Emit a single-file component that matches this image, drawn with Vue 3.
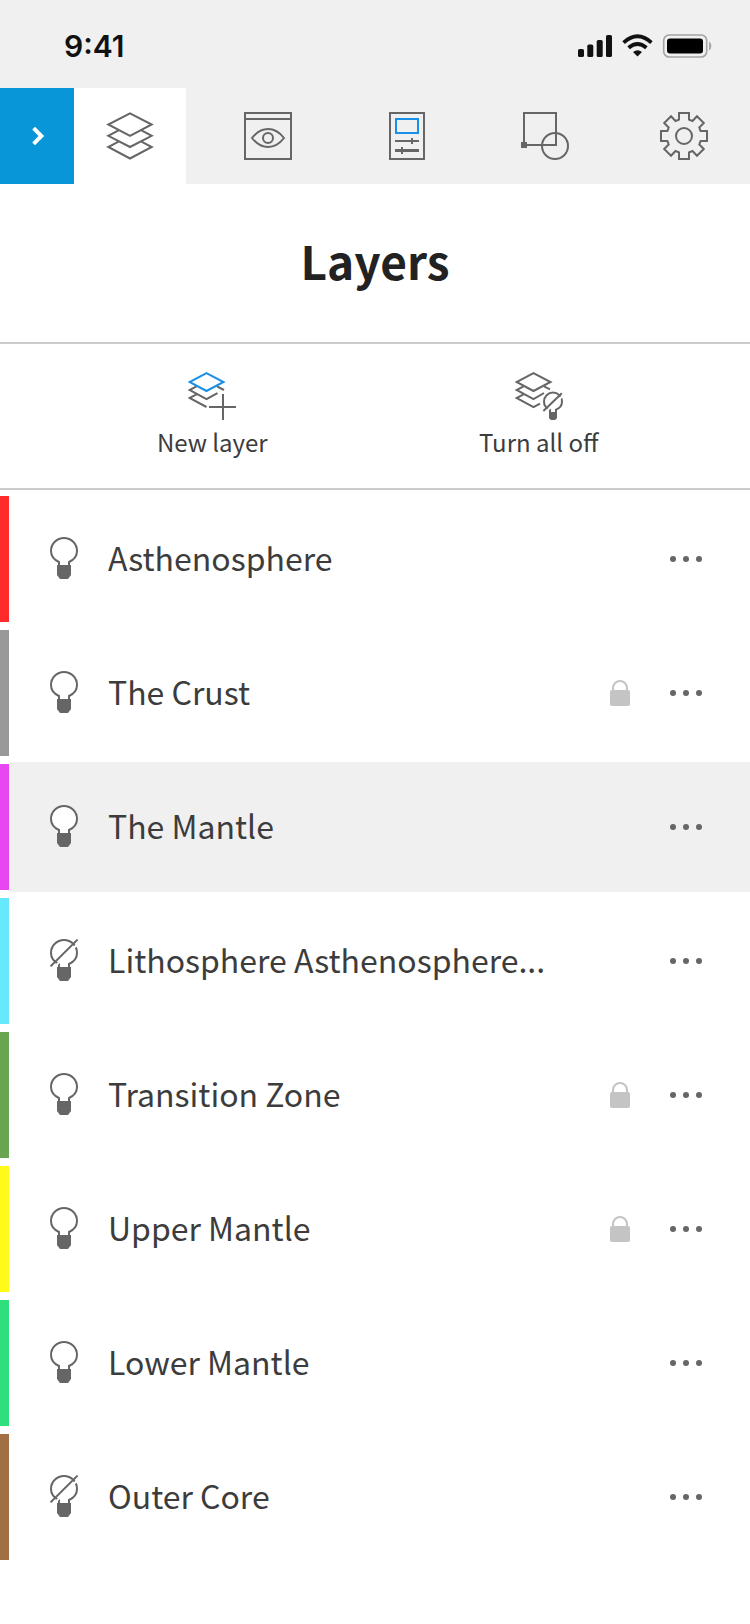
<script setup>
import { ref } from 'vue'

const layers = ref([
  { name: 'Asthenosphere', color: '#ff2a2a', on: true, locked: false },
  { name: 'The Crust', color: '#999999', on: true, locked: true },
  { name: 'The Mantle', color: '#e846f0', on: true, locked: false },
  { name: 'Lithosphere Asthenosphere...', color: '#66e8ff', on: false, locked: false },
  { name: 'Transition Zone', color: '#69a550', on: true, locked: true },
  { name: 'Upper Mantle', color: '#fffa17', on: true, locked: true },
  { name: 'Lower Mantle', color: '#2edf7c', on: true, locked: false },
  { name: 'Outer Core', color: '#a07044', on: false, locked: false },
])
const selected = ref('The Mantle')

function turnAllOff() {
  layers.value.forEach((layer) => { layer.on = false })
}
</script>

<template>
  <div class="app">
    <header class="status">
      <time class="clock">9:41</time>
      <svg class="indicators" viewBox="0 0 134 24" role="img" aria-label="Signal, Wi-Fi, battery">
        <g fill="#111">
          <rect x="0" y="15" width="6" height="8" rx="1.6" />
          <rect x="9.3" y="10.6" width="6" height="12.4" rx="1.6" />
          <rect x="18.7" y="6" width="6" height="17" rx="1.6" />
          <rect x="28" y="1" width="6" height="22" rx="1.6" />
          <path d="M59.5 22.6L55 18.1Q59.5 14.6 64 18.1Z" />
        </g>
        <g fill="none" stroke="#111" stroke-width="3.8">
          <path d="M50.6 13.8Q59.5 6.2 68.4 13.8" />
          <path d="M45.6 8.6Q59.5 -3.9 73.4 8.6" />
        </g>
        <rect x="85.7" y="1" width="43" height="22" rx="5.5" fill="none" stroke="#a3a3a3" stroke-width="1.6" />
        <rect x="89" y="4.5" width="36" height="15" rx="3" />
        <path d="M131 7.6Q133.4 9 133.4 12T131 16.4Z" fill="#a9a9a9" />
      </svg>
    </header>

    <nav class="tabs" aria-label="Panels">
      <button class="expand" type="button" aria-label="Collapse panel">
        <svg class="icon chevron" viewBox="0 0 48 48"><path d="M20.6 16.2L28.4 24L20.6 31.8" /></svg>
      </button>
      <button class="tab active" type="button" aria-label="Layers" aria-current="page">
        <svg class="icon" viewBox="0 0 48 48">
          <path d="M24 1.3L45.7 12.5L24 23.8L2.3 12.5Z" />
          <path d="M13 18.2L2.3 23.8L24 35L45.7 23.8L35 18.2M13 29.4L2.3 35L24 46.5L45.7 35L35 29.4" />
        </svg>
      </button>
      <div class="others">
        <button class="tab" type="button" aria-label="Views">
          <svg class="icon" viewBox="0 0 48 48">
            <path d="M1 1H47V47H1ZM1 7H47" />
            <path d="M8 26C13 19.5 18.5 17 24 17S35 19.5 40 26C35 32.5 29.5 35 24 35S13 32.5 8 26Z" />
            <circle cx="24" cy="26" r="5" />
          </svg>
        </button>
        <button class="tab" type="button" aria-label="Properties">
          <svg class="icon" viewBox="0 0 48 48">
            <path d="M7 1H41V47H7ZM12 29H36M29 26V32M19 35V42" />
            <path d="M12 38.5H36" stroke-width="3" />
            <rect class="accent" x="13" y="7" width="22" height="14" />
          </svg>
        </button>
        <button class="tab" type="button" aria-label="Object snap">
          <svg class="icon" viewBox="0 0 48 48">
            <path d="M3 1H35V33H3Z" />
            <rect class="solid" x="0" y="30" width="6" height="6" />
            <circle cx="34" cy="34" r="13" />
          </svg>
        </button>
        <button class="tab" type="button" aria-label="Settings">
          <svg class="icon" viewBox="0 0 48 48">
            <path d="M19 1H29V7.6L32.5 9L37 4.2L43.8 11L39.3 15.6L40.6 19H47V29H40.6L39.3 32.4L43.8 37L37 43.8L32.5 39L29 40.4V47H19V40.4L15.5 39L11 43.8L4.2 37L8.7 32.4L7.4 29H1V19H7.4L8.7 15.6L4.2 11L11 4.2L15.5 9L19 7.6Z" />
            <circle cx="24" cy="24" r="8" />
          </svg>
        </button>
      </div>
    </nav>

    <main>
      <h1>Layers</h1>

      <div class="actions">
        <button class="action" type="button">
          <svg class="icon" viewBox="0 0 48 48">
            <path d="M8.5 14.4L1.5 18L18.5 27.2L29.5 21.2M29 14.4L36 18M8.5 22.4L1.5 26L18.5 35" />
            <path d="M35 22V48M21 35H48" />
            <path class="accent" d="M18.5 1.2L35.5 10L18.5 19L1.5 10Z" />
          </svg>
          <span>New layer</span>
        </button>
        <button class="action" type="button" @click="turnAllOff">
          <svg class="icon" viewBox="0 0 48 48">
            <path d="M18.5 1.2L35.5 10L18.5 19L1.5 10Z" />
            <path d="M8.5 14.4L1.5 18L18.5 27.2L29 21M29 14.4L35 17.4M8.5 22.4L1.5 26L18.5 35.2L25 31.6" />
            <path d="M35 40V37.6C31.5 36.4 29 33.4 29 29.6A9 9 0 0 1 47 29.6C47 33.4 44.5 36.4 41 37.6V40" />
            <path class="gap" d="M30 40.6L49 22.6" />
            <path d="M28.4 39L46.8 21.2" />
            <path class="solid" d="M34 40H42V46Q41 48 39.6 48H36.4Q35 48 34 46Z" />
          </svg>
          <span>Turn all off</span>
        </button>
      </div>

      <ul class="layers">
        <li v-for="layer in layers" :key="layer.name" class="row" :class="{ selected: layer.name === selected }">
          <span class="swatch" :style="{ backgroundColor: layer.color }"></span>
          <div class="body">
            <button class="toggle" type="button" :aria-pressed="layer.on" :aria-label="`Visibility of ${layer.name}`" @click="layer.on = !layer.on">
              <svg class="bulb" viewBox="0 0 28 44">
                <path class="glass" d="M9 28V25C4.5 23 1 19.4 1 14A13 13 0 0 1 27 14C27 19.4 23.5 23 19 25V28" />
                <template v-if="!layer.on">
                  <path class="gap" d="M3.2 29.2L30.2 2.6" />
                  <path d="M.6 27.4L27.6 .6" />
                </template>
                <path class="solid" d="M7 28H21V38L18 42H10L7 38Z" />
              </svg>
            </button>
            <button class="name" type="button" @click="selected = layer.name">{{ layer.name }}</button>
            <svg v-if="layer.locked" class="lock" viewBox="0 0 20 26" role="img" aria-label="Locked">
              <path d="M3 11V8A7 7 0 0 1 17 8V11" />
              <rect x="0" y="10" width="20" height="16" rx="2" />
            </svg>
            <button class="more" type="button" :aria-label="`More options for ${layer.name}`">
              <svg class="dots" viewBox="0 0 32 6">
                <circle cx="3" cy="3" r="3" />
                <circle cx="16" cy="3" r="3" />
                <circle cx="29" cy="3" r="3" />
              </svg>
            </button>
          </div>
        </li>
      </ul>
    </main>
  </div>
</template>

<style>
body {
  margin: 0;
  background: #fff;
}
</style>

<style scoped>
.app {
  font-family: "Noto Sans CJK SC", "Noto Sans", sans-serif;
  color: #3c3c3c;
  background: #fff;
}

button {
  margin: 0;
  padding: 0;
  border: 0;
  background: none;
  color: inherit;
  font: inherit;
  cursor: pointer;
}

svg {
  display: block;
  flex: none;
}

.status {
  display: flex;
  align-items: center;
  justify-content: space-between;
  height: 88px;
  padding: 4px 38px 0 64px;
  box-sizing: border-box;
  background: #f0f0f0;
}

.clock {
  font: 600 30px/40px Inter, sans-serif;
  color: #111;
}

.indicators {
  width: 134px;
  height: 24px;
}

.tabs {
  display: flex;
  height: 96px;
  background: #f0f0f0;
}

.tab,
.expand {
  display: flex;
  align-items: center;
  justify-content: center;
}

.expand {
  width: 74px;
  background: #0896d9;
}

.active {
  width: 112px;
  background: #fff;
}

.others {
  display: flex;
  flex: 1;
  justify-content: space-between;
  padding: 0 42px 0 58px;
}

.icon,
.bulb {
  fill: none;
  stroke: #666;
  stroke-width: 2;
}

.icon {
  width: 48px;
  height: 48px;
}

.chevron {
  stroke: #fff;
  stroke-width: 4;
}

.accent {
  stroke: #1a8fe8;
}

.solid {
  fill: #666;
  stroke: none;
}

.gap {
  stroke: #fff;
}

h1 {
  margin: 0;
  padding: 40px 0 46px;
  border-bottom: 2px solid #ccc;
  font-size: 46px;
  font-weight: 700;
  line-height: 72px;
  text-align: center;
  color: #222;
}

.actions {
  display: flex;
  padding: 28px 48px 28px 49px;
  border-bottom: 2px solid #ccc;
}

.action {
  display: flex;
  flex: 1;
  flex-direction: column;
  align-items: center;
  gap: 4px;
  font-size: 24px;
  line-height: 36px;
}

.layers {
  display: flex;
  flex-direction: column;
  gap: 4px;
  margin: 0;
  padding: 4px 0;
  list-style: none;
}

.row {
  display: flex;
  height: 130px;
}

.swatch {
  width: 9px;
  margin: 2px 0;
}

.body {
  display: flex;
  flex: 1;
  align-items: center;
  min-width: 0;
  padding: 0 36px 0 41px;
}

.selected .body {
  background: #f0f0f0;
}

.bulb {
  width: 28px;
  height: 44px;
}

.glass {
  fill: #fff;
}

.name {
  flex: 1;
  min-width: 0;
  margin-left: 30px;
  padding-bottom: 4px;
  overflow: hidden;
  font-size: 32px;
  line-height: 48px;
  text-align: left;
  text-overflow: ellipsis;
  white-space: nowrap;
}

.lock {
  width: 20px;
  height: 26px;
  margin-right: 28px;
  fill: #c4c4c4;
}

.lock path {
  fill: none;
  stroke: #c4c4c4;
  stroke-width: 2;
}

.more {
  padding: 20px 12px;
}

.dots {
  width: 32px;
  height: 6px;
  fill: #666;
}
</style>
